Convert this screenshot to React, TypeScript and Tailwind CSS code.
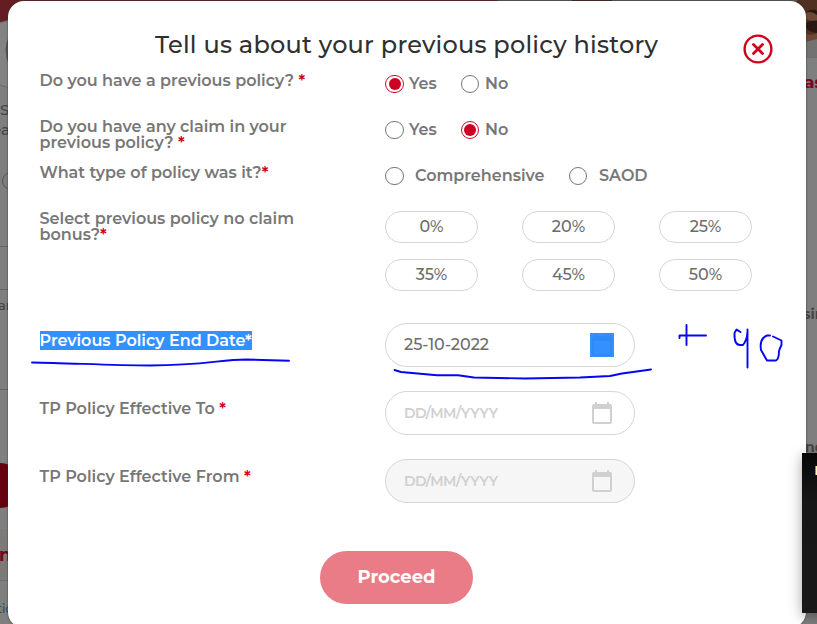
import type { ReactNode } from "react";

const ink = "#0505f5";

function Star() {
  return <span className="text-[#d0021b]">*</span>;
}

function Radio({ checked = false, narrow = false }: { checked?: boolean; narrow?: boolean }) {
  return (
    <span
      className={`flex h-[18px] shrink-0 items-center justify-center rounded-full border ${
        narrow ? "w-[18px]" : "w-[19px]"
      } ${checked ? "border-[#cf0a2c]" : "border-[#767676]"}`}
    >
      {checked && <span className="h-3 w-3 rounded-full bg-[#cc0022]" />}
    </span>
  );
}

function YesNo({ value }: { value: "yes" | "no" }) {
  return (
    <div className="flex h-6 items-center">
      <Radio checked={value === "yes"} />
      <span className="ml-[5px] w-[52px]">Yes</span>
      <Radio narrow checked={value === "no"} />
      <span className="ml-[6px]">No</span>
    </div>
  );
}

function Row({ label, className, children }: { label: ReactNode; className: string; children: ReactNode }) {
  return (
    <div className={`grid grid-cols-[345px_1fr] items-start ${className}`}>
      <div className="-ml-[0.5px] mt-px whitespace-nowrap leading-4">{label}</div>
      {children}
    </div>
  );
}

function Calendar() {
  return (
    <svg width="20" height="22" viewBox="0 0 20 22">
      <rect x="1" y="3" width="18" height="18" rx="1" fill="none" stroke="currentColor" strokeWidth="2" />
      <path d="M1 2h18v5H1zM3 0h2v3H3zM15 0h2v3h-2z" fill="currentColor" />
    </svg>
  );
}

function DateField({ disabled = false }: { disabled?: boolean }) {
  return (
    <div
      className={`flex h-11 w-[250px] items-center justify-between rounded-full border border-[#d6d6d6] pl-[18px] pr-[22px] text-[#d0d0d0] ${
        disabled ? "bg-[#f6f6f6]" : "bg-white"
      }`}
    >
      <span className="text-[14px] tracking-[-0.58px]">DD/MM/YYYY</span>
      <Calendar />
    </div>
  );
}

function PageBehind() {
  return (
    <div className="flex h-full justify-between overflow-hidden bg-[#7f7f7f] font-medium text-[#444]">
      <div className="flex w-8 flex-col overflow-hidden whitespace-nowrap">
        <svg width="32" height="100" viewBox="0 0 32 100" className="shrink-0">
          <path d="M0 0h32v22H0z" fill="#661d22" />
          <circle cx="14" cy="54" r="34" fill="#838383" stroke="#6c6c6c" />
          <path d="M9 36Q2 50 9 65" fill="#555" />
        </svg>
        <div className="h-5 text-[15px] leading-5">S</div>
        <div className="-ml-[8px] h-5 text-[15px] leading-5">ea</div>
        <div className="mt-8 ml-[2px] h-[18px] w-[18px] shrink-0 rounded-full border border-[#555]" />
        <div className="mt-14 h-[43px] shrink-0 border-t border-[#636363]" />
        <div className="h-[100px] shrink-0 border-t border-[#636363] pt-[5px] text-[13px] leading-5">
          <span className="-ml-[2px]">ar</span>
        </div>
        <div className="h-[43px] shrink-0 border-t border-[#636363]" />
        <div className="mt-[31px] -ml-[22px] h-[45px] w-[45px] shrink-0 rounded-full bg-[#64000f]" />
        <div className="mt-[21px] h-[52px] shrink-0 border-b border-[#6d6d6d] bg-[#7d7b79] text-[18px] font-bold leading-[52px] text-[#79001c]">
          <span className="-ml-px">n</span>
        </div>
        <div className="-ml-[3px] pt-[18px] text-[12px] leading-5 text-[#22536e]">tion</div>
      </div>
      <div className="flex w-[320px] flex-col items-end overflow-hidden whitespace-nowrap">
        <svg width="320" height="58" viewBox="0 0 320 58" className="shrink-0">
          <path d="M0 0h320v58H0z" fill="#59585a" />
          <path d="M75 0h40v2h-40z" fill="#43251c" />
          <path d="M300 0h20v42q-12-2-20-10z" fill="#50301f" />
          <path d="M309 12q7-4 11-1v4q-6 0-11-3M307 25q6-6 13-4v12q-9-1-13-8" fill="#2a1712" />
          <path d="M309 13q5-3 11 2v5q-6 2-11-1zM309 34q6 2 11-1v7q-5 3-11 0z" fill="#6d4935" />
          <path d="M309 42l11-3v19h-11z" fill="#727272" />
        </svg>
        <div className="w-[13px] pt-[10px] text-[17px] font-bold leading-7 text-[#7b001e]">as</div>
        <div className="w-[14px] pt-[208px] text-[14px] font-bold leading-5">sin</div>
        <div className="w-[12px] pt-[113px] text-[14px] font-bold leading-5">ne</div>
      </div>
    </div>
  );
}

export default function App() {
  return (
    <div className="relative h-[624px] w-[817px] overflow-hidden font-['Montserrat','Inter',sans-serif] text-[16px] font-semibold text-[#777777]">
      <div className="h-[624px]">
        <PageBehind />
      </div>
      <div className="absolute left-[20px] top-0 h-px w-[478px] bg-[#5e2022]" />

      <main className="absolute left-2 top-px h-[627px] w-[798px] rounded-[16px] bg-white pl-8 shadow-[0_0_2px_#333]">
        <header className="flex h-[71px] items-start">
          <h1 className="ml-[115px] mt-7 w-[588px] whitespace-nowrap text-[24px] font-medium leading-8 tracking-[0.23px] text-[#303030]">
            Tell us about your previous policy history
          </h1>
          <svg width="30" height="30" viewBox="0 0 30 30" fill="none" stroke="#d0021b" className="mt-[33px]">
            <circle cx="15" cy="15" r="13.4" strokeWidth="2.4" />
            <path d="M10.5 10.5l9 9m0-9l-9 9" strokeWidth="2.8" strokeLinecap="round" />
          </svg>
        </header>

        <Row className="h-[46px]" label={<>Do you have a previous policy? <Star /></>}>
          <YesNo value="yes" />
        </Row>
        <Row className="h-[46px]" label={<>Do you have any claim in your<br />previous policy? <Star /></>}>
          <YesNo value="no" />
        </Row>
        <Row className="h-[46px]" label={<>What type of policy was it?<Star /></>}>
          <div className="flex h-6 items-center">
            <Radio />
            <span className="ml-[11px] w-[154px]">Comprehensive</span>
            <Radio narrow />
            <span className="ml-[12px]">SAOD</span>
          </div>
        </Row>
        <Row className="h-[113px]" label={<>Select previous policy no claim<br />bonus?<Star /></>}>
          <div className="mt-px grid grid-cols-[93px_93px_93px] gap-x-11 gap-y-4 font-medium text-[#6c6c6c]">
            {["0%", "20%", "25%", "35%", "45%", "50%"].map((bonus) => (
              <div key={bonus} className="flex h-8 items-center justify-center rounded-full border border-[#d6d6d6] pb-px">
                {bonus}
              </div>
            ))}
          </div>
        </Row>
        <Row
          className="h-[68px]"
          label={
            <div className="mt-[7px] h-[19px] w-[212px] bg-[#3390ff] leading-[19px] text-white">
              Previous Policy End Date*
            </div>
          }
        >
          <div className="flex h-11 w-[250px] items-center justify-between rounded-full border border-[#d6d6d6] pl-[18px] pr-5">
            <span className="font-medium text-[#6c6c6c]">25-10-2022</span>
            <span className="flex h-6 w-6 items-center justify-center bg-[#3390ff] text-[#2e8af6]">
              <Calendar />
            </span>
          </div>
        </Row>
        <Row className="h-[68px]" label={<div className="mt-[9px]">TP Policy Effective To <Star /></div>}>
          <DateField />
        </Row>
        <Row className="h-[92px]" label={<div className="mt-[9px]">TP Policy Effective From <Star /></div>}>
          <DateField disabled />
        </Row>
        <button className="ml-[280px] flex h-[53px] w-[153px] items-center justify-center rounded-full bg-[#e97c87] text-[18px] font-bold text-white">
          Proceed
        </button>
      </main>

      <svg
        className="absolute inset-0"
        width="817"
        height="624"
        viewBox="0 0 817 624"
        fill="none"
        stroke={ink}
        strokeWidth="1.9"
        strokeLinecap="round"
        strokeLinejoin="round"
      >
        <path d="M32 362.5C70 363 110 365.5 150 365.5C205 365.5 220 359.5 246 359.5L289 360.7" />
        <path d="M394.500 370L401 372L437 375.300H458L474 377.500L525 378.500L580 377.500L610 376L622 373.500L651 369.500" />
        <path d="M679.500 338V335.500H706M686.500 325V345M740.500 332Q738 330.500 736.500 329.500L734.500 333Q734 345 740 345H743Q747 340 747.500 332M747.500 329.500V367.500" />
        <path d="M770 335.500H767C761 338 760 344 761 350L767 360.500H776Q779 359 779 351Q780 348 781.500 345V340.500L773 336.500" />
      </svg>

      <aside className="absolute left-[802px] top-[453px] flex h-[160px] w-[30px] bg-gradient-to-b from-[#080808] via-[#171717] via-30% to-[#181818] pl-[13px] pt-[13px] shadow-[0_3px_14px_rgba(0,0,0,0.35)]">
        <span className="h-[9px] w-px bg-[#00b7f0]" />
        <span className="h-[9px] w-px bg-[#fff3b0]" />
      </aside>
    </div>
  );
}
